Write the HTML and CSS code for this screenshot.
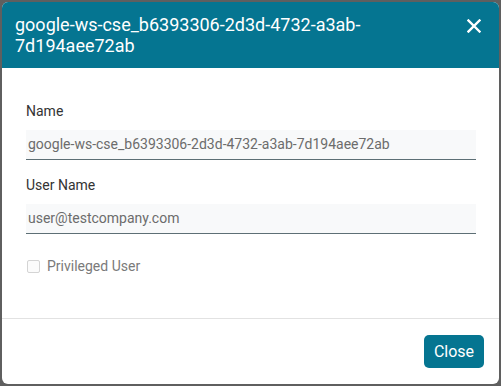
FILE: index.html
```html
<!DOCTYPE html>
<html>
<head>
<meta charset="utf-8">
<link rel="stylesheet" href="styles.css">
</head>
<body>
<div class="modal">
  <div class="modal-header">
    <h2 class="modal-title">google-ws-cse_b6393306-2d3d-4732-a3ab-<br>7d194aee72ab</h2>
    <button class="close-x" aria-label="Close">
      <svg width="14" height="14" viewBox="0 0 14 14"><path d="M1.5 1.5L12.5 12.5M12.5 1.5L1.5 12.5" stroke="#fff" stroke-width="2.4" stroke-linecap="square"/></svg>
    </button>
  </div>
  <div class="modal-body">
    <label class="field-label">Name</label>
    <div class="field-input">google-ws-cse_b6393306-2d3d-4732-a3ab-7d194aee72ab</div>
    <label class="field-label second">User Name</label>
    <div class="field-input">user@testcompany.com</div>
    <div class="check-row">
      <span class="checkbox"></span>
      <span class="check-label">Privileged User</span>
    </div>
  </div>
  <div class="modal-footer">
    <button class="btn-close">Close</button>
  </div>
</div>
</body>
</html>
```
FILE: styles.css
```css
html, body {
  margin: 0;
  padding: 0;
}
body {
  background: #5f5f5f;
  font-family: Roboto, "Liberation Sans", sans-serif;
  padding: 2px;
  width: 497px;
  height: 382px;
}
.modal {
  background: #fff;
  border-radius: 6px;
  overflow: hidden;
  height: 382px;
  display: flex;
  flex-direction: column;
}
.modal-header {
  background: #057591;
  display: flex;
  align-items: flex-start;
  justify-content: space-between;
  padding: 12px 18px 10px 13px;
  height: 44px;
}
.modal-title {
  margin: 0;
  color: #fff;
  font-weight: 400;
  font-size: 18px;
  line-height: 21px;
}
.close-x {
  background: none;
  border: 0;
  padding: 0;
  margin-top: 5px;
  width: 14px;
  height: 14px;
  display: flex;
}
.modal-body {
  padding: 33px 23px 42px 24px;
  display: flex;
  flex-direction: column;
}
.field-label {
  font-size: 14px;
  line-height: 20px;
  color: #333;
  height: 20px;
}
.field-label.second {
  margin-top: 15px;
}
.field-input {
  margin-top: 9px;
  background: #f8f9fa;
  border-bottom: 1px solid #5d6f75;
  height: 29px;
  line-height: 29px;
  padding-left: 2px;
  font-size: 14px;
  color: #6c6c6c;
}
.check-row {
  margin-top: 22px;
  display: flex;
  align-items: center;
  height: 20px;
}
.checkbox {
  width: 11px;
  height: 11px;
  border: 1px solid #d4d4d4;
  border-radius: 2px;
  margin-left: 1px;
  margin-right: 7px;
  background: #fbfbfb;
}
.check-label {
  font-size: 14px;
  color: #7a7a7a;
}
.modal-footer {
  border-top: 1px solid #e2e2e2;
  display: flex;
  justify-content: flex-end;
  padding: 16px 15px 16px;
}
.btn-close {
  background: #057591;
  color: #fff;
  border: 0;
  border-radius: 5px;
  font-family: Roboto, "Liberation Sans", sans-serif;
  font-size: 16px;
  width: 60px;
  height: 33px;
  padding: 0;
}
```
